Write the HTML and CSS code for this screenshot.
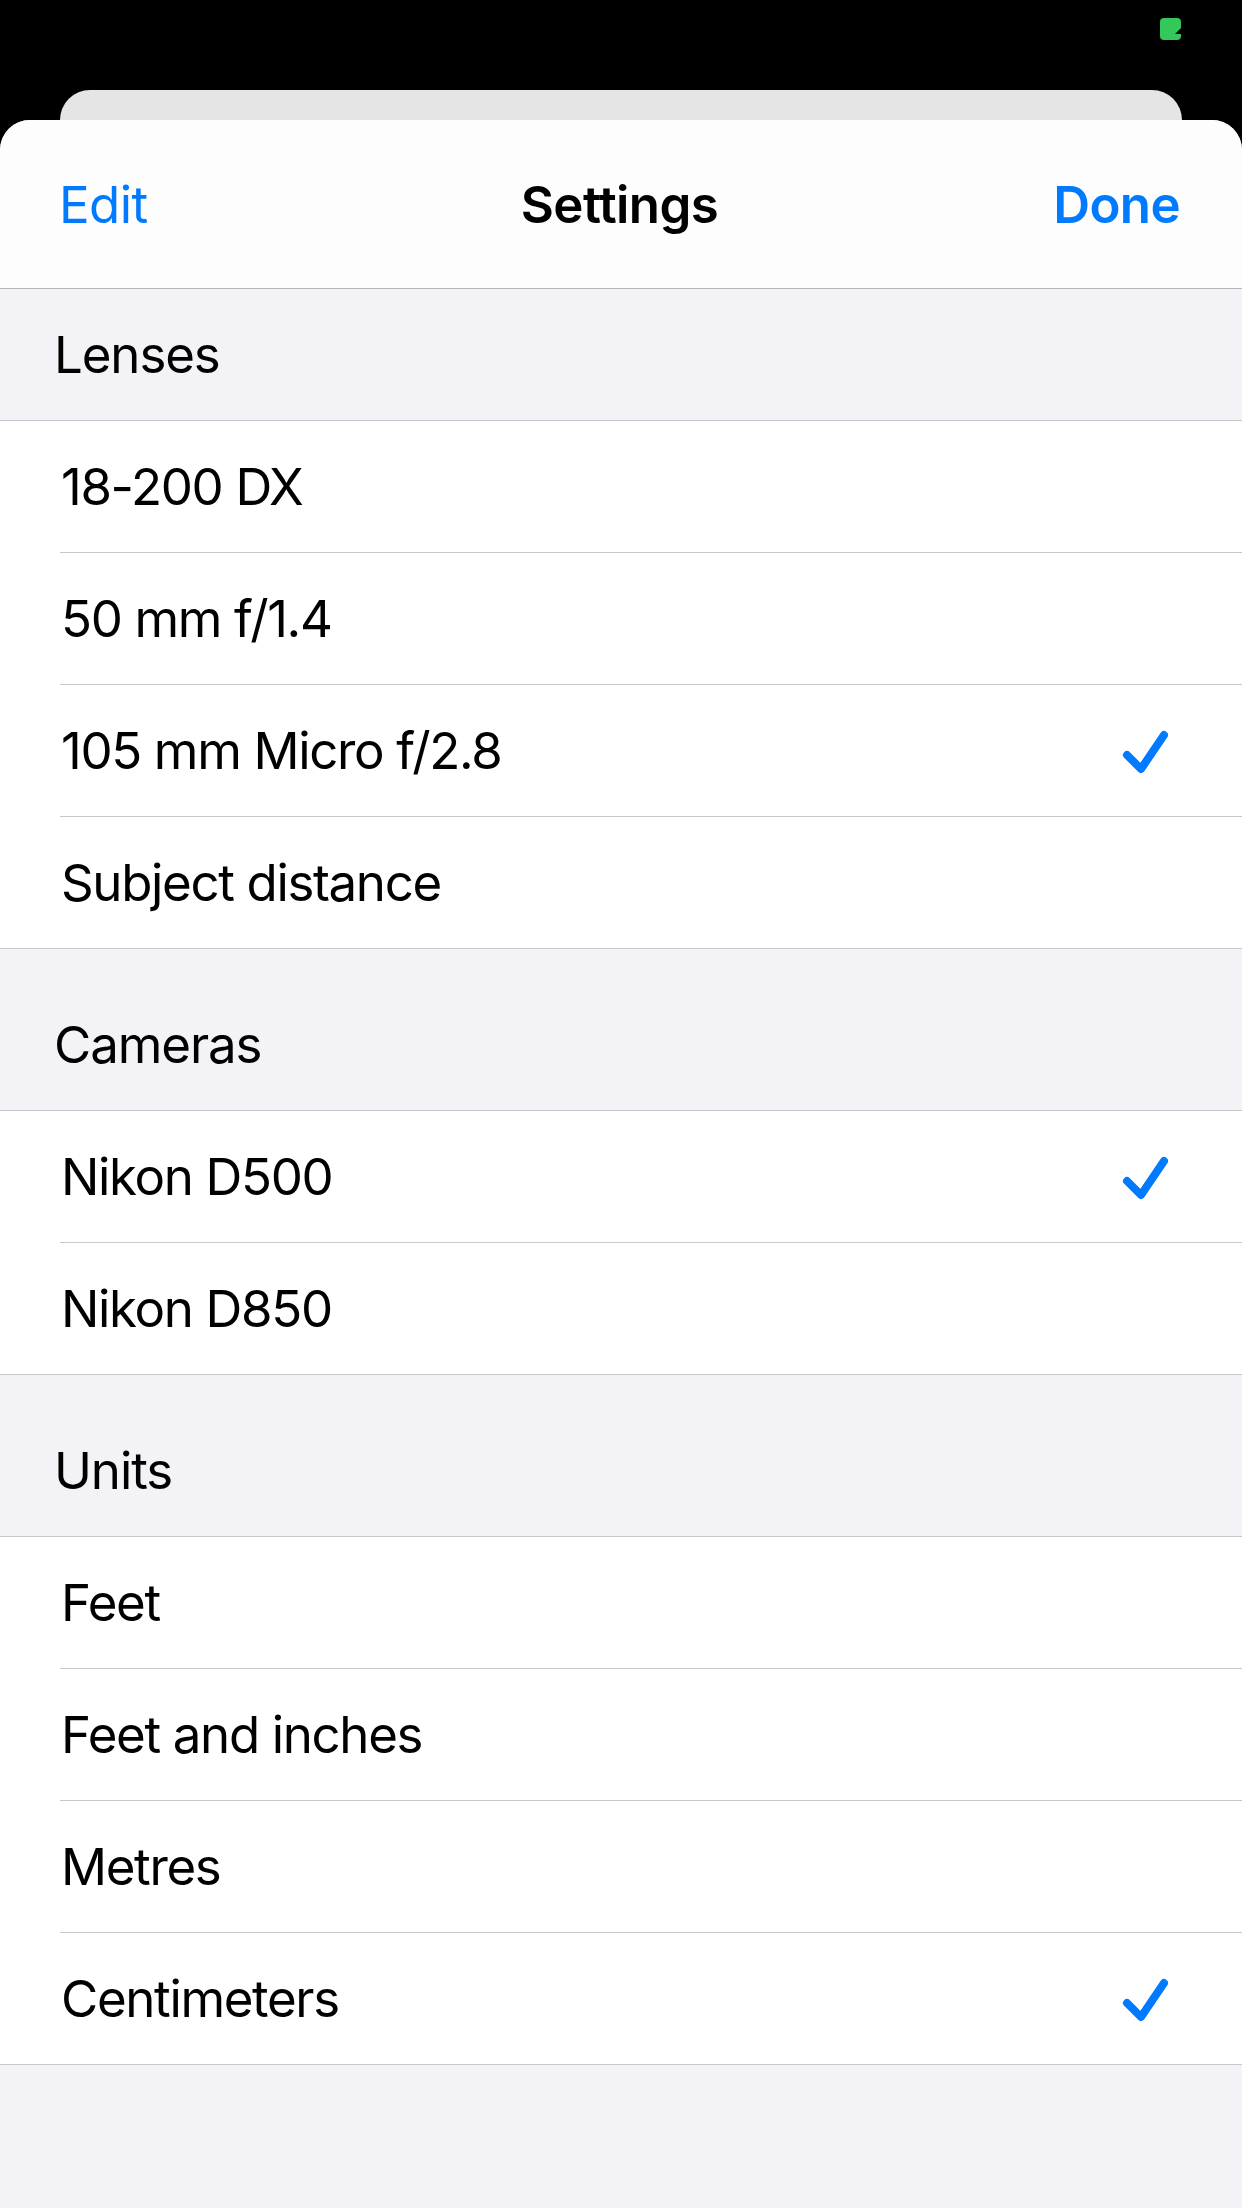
FILE: index.html
```html
<!DOCTYPE html>
<html lang="en">
<head>
<meta charset="utf-8">
<title>Settings</title>
<link rel="stylesheet" href="styles.css">
</head>
<body>
<div class="status">
  <svg class="batt" width="21" height="22" viewBox="0 0 21 22"><path d="M4 0 H17 Q21 0 21 4 V10 L15 16 H21 V18 Q21 22 17 22 H4 Q0 22 0 18 V4 Q0 0 4 0 Z" fill="#34c759"/></svg>
</div>
<div class="backcard"></div>
<main class="sheet">
  <header class="nav">
    <span class="nav-left">Edit</span>
    <span class="nav-title">Settings</span>
    <span class="nav-right">Done</span>
  </header>

  <section class="group">
    <div class="group-head first">Lenses</div>
    <ul class="rows">
      <li class="row"><span>18-200 DX</span></li>
      <li class="row"><span>50 mm f/1.4</span></li>
      <li class="row"><span>105 mm Micro f/2.8</span><svg class="check" width="48" height="44" viewBox="0 0 48 44"><path d="M7 25 L21 39 L44 5" fill="none" stroke="#007aff" stroke-width="8" stroke-linecap="round" stroke-linejoin="round"/></svg></li>
      <li class="row"><span>Subject distance</span></li>
    </ul>
  </section>

  <section class="group">
    <div class="group-head">Cameras</div>
    <ul class="rows">
      <li class="row"><span>Nikon D500</span><svg class="check" width="48" height="44" viewBox="0 0 48 44"><path d="M7 25 L21 39 L44 5" fill="none" stroke="#007aff" stroke-width="8" stroke-linecap="round" stroke-linejoin="round"/></svg></li>
      <li class="row"><span>Nikon D850</span></li>
    </ul>
  </section>

  <section class="group">
    <div class="group-head">Units</div>
    <ul class="rows">
      <li class="row"><span>Feet</span></li>
      <li class="row"><span>Feet and inches</span></li>
      <li class="row"><span>Metres</span></li>
      <li class="row"><span>Centimeters</span><svg class="check" width="48" height="44" viewBox="0 0 48 44"><path d="M7 25 L21 39 L44 5" fill="none" stroke="#007aff" stroke-width="8" stroke-linecap="round" stroke-linejoin="round"/></svg></li>
    </ul>
  </section>
</main>
</body>
</html>
```

FILE: styles.css
```css
* { box-sizing: border-box; }
html, body {
  margin: 0;
  padding: 0;
  background: #000;
  font-family: Inter, "Liberation Sans", sans-serif;
  color: #000;
}
body {
  width: 1242px;
  height: 2208px;
  overflow: hidden;
  display: flex;
  flex-direction: column;
}
.status {
  height: 90px;
  display: flex;
  justify-content: flex-end;
  align-items: flex-start;
  padding: 18px 61px 0 0;
}
.backcard {
  height: 30px;
  margin: 0 60px;
  background: #e5e5e5;
  border-radius: 30px 30px 0 0;
}
.sheet {
  flex: 1;
  background: #f2f2f7;
  border-radius: 30px 30px 0 0;
  overflow: hidden;
}
.nav {
  height: 169px;
  background: #fdfdfd;
  border-bottom: 1px solid #b4b4b8;
  display: grid;
  grid-template-columns: 1fr auto 1fr;
  align-items: center;
  padding: 0 62px 0 59px;
  font-size: 51px;
  letter-spacing: -0.6px;
}
.nav-left { color: #007aff; justify-self: start; }
.nav-title { font-weight: 600; }
.nav-right { color: #007aff; font-weight: 600; justify-self: end; }

.group-head {
  height: 162px;
  display: flex;
  align-items: flex-end;
  padding: 0 0 34px 54px;
  font-size: 51px;
  line-height: 62px;
  letter-spacing: -1.1px;
  border-bottom: 1px solid #c8c7cc;
}
.group-head.first { height: 132px; }
.rows {
  list-style: none;
  margin: 0;
  padding: 0;
  background: #fff;
  border-bottom: 1px solid #c8c7cc;
}
.row {
  height: 132px;
  margin-left: 60px;
  padding: 0 74px 0 1px;
  display: flex;
  align-items: center;
  justify-content: space-between;
  font-size: 51px;
  letter-spacing: -1.35px;
  border-bottom: 1px solid #c8c7cc;
}
.row:last-child {
  border-bottom: none;
  height: 131px;
}
.check { display: block; margin-top: 2px; }
```
